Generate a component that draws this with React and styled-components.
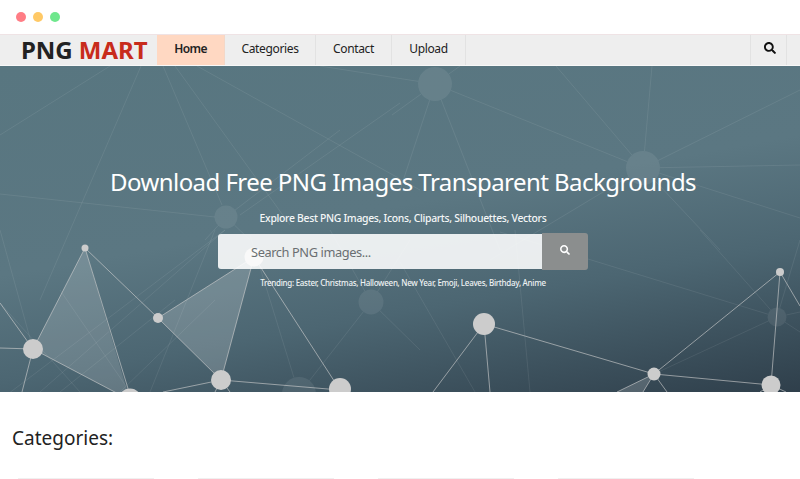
import React from 'react';
import styled, { createGlobalStyle } from 'styled-components';
import { FaSearch } from 'react-icons/fa';

const Global = createGlobalStyle`
  html, body { margin: 0; padding: 0; height: 479px; overflow: hidden; background: #fff; }
  * { box-sizing: border-box; }
  body { font-family: "Noto Sans", "Open Sans", sans-serif; color: #222; }
`;

const Page = styled.div`width: 800px; height: 479px; overflow: hidden;`;
const WindowBar = styled.div`height: 34px; display: flex; align-items: center; gap: 7px; padding: 0 0 0 16px; background: #fff;`;
const Dot = styled.span`width: 10px; height: 10px; border-radius: 50%; background: ${p => p.$c};`;

const Nav = styled.nav`
  height: 32px; display: flex; align-items: stretch; background: #eee;
  border-top: 1px solid #efe3e5; border-bottom: 1px solid #f8f8f8;
`;
const Logo = styled.div`
  width: 157px; padding-left: 21px; font-size: 24px; letter-spacing: -0.05px; font-weight: 700; line-height: 30px; color: #222; white-space: nowrap;
  span { color: #c82c1c; }
`;
const NavItem = styled.a`
  width: ${p => p.$w}px; padding: 0 0 3px; display: flex; align-items: center; justify-content: center;
  font-size: 12px; letter-spacing: ${p => (p.$active ? '-0.6px' : '-0.35px')}; color: #222; font-weight: ${p => (p.$active ? 600 : 400)};
  background: ${p => (p.$active ? '#ffd8c2' : 'transparent')};
  border-right: 1px solid ${p => (p.$active ? '#f3d8c8' : '#e2e2e2')};
`;
const NavSearch = styled.button`
  margin-left: auto; margin-right: 13px; width: 37px; padding: 0 0 4px 2px; border: 0; background: transparent; color: #111;
  border-left: 1px solid #e2e2e2; border-right: 1px solid #e2e2e2; display: flex; align-items: center; justify-content: center; font-size: 12px;
`;

const Hero = styled.section`
  position: relative; height: 326px; overflow: hidden; display: flex; flex-direction: column; align-items: center; padding: 99px 0 0 6px; color: #fff;
  background: linear-gradient(170deg, #587680 0%, #5b7782 45%, #4c6672 68%, #2f3f4b 100%);
`;
const Net = styled.svg`position: absolute; inset: 0; width: 800px; height: 326px;`;
const Heading = styled.h1`
  position: relative; margin: 0; font-size: 24px; letter-spacing: -0.55px; font-weight: 400; line-height: 34px; white-space: nowrap;
`;
const Sub = styled.p`
  position: relative; margin: 10px 0 0; font-size: 10.4px; letter-spacing: -0.3px; line-height: 18px; font-weight: 500; color: #f4f6f7; white-space: nowrap;
`;
const SearchRow = styled.div`position: relative; margin-top: 6px; display: flex; align-items: center; width: 370px; height: 37px;`;
const SearchInput = styled.div`
  flex: 1; height: 35px; padding-left: 33px; display: flex; align-items: center; font-size: 12.8px; letter-spacing: -0.4px; color: #6a6f72;
  background: rgba(255, 255, 255, 0.88); border-radius: 3px 0 0 3px;
`;
const SearchButton = styled.button`
  width: 46px; height: 37px; padding: 0 0 4px; border: 0; background: #8b8e8e; color: #fff; border-radius: 0 3px 3px 0;
  display: flex; align-items: center; justify-content: center; font-size: 10px;
`;
const Trending = styled.p`
  position: relative; margin: 6px 0 0; font-size: 8px; letter-spacing: -0.29px; line-height: 13px; color: #eef2f3; font-weight: 500; white-space: nowrap;
`;

const Categories = styled.section`padding: 33px 0 0 12px;`;
const CategoriesTitle = styled.h2`margin: 0; font-size: 19px; font-weight: 400; line-height: 27px; color: #222;`;
const CardGrid = styled.div`display: grid; grid-template-columns: repeat(4, 136px); gap: 44px; margin: 26px 0 0 6px;`;
const Card = styled.div`height: 100px; border-top: 1px solid #f0f0f0;`;

const faintNodes = [[435,84,17],[643,168,17],[226,217,11.5],[371,302,12.5],[777,317,9.5],[299,394,17]];
const trim = ([a, b, c, d]) => {
  const p = [a, b, c, d];
  const len = Math.hypot(c - a, d - b);
  faintNodes.forEach(([x, y, r]) => {
    if (a === x && b === y) { p[0] = a + ((c - a) * r) / len; p[1] = b + ((d - b) * r) / len; }
    if (c === x && d === y) { p[2] = c - ((c - a) * r) / len; p[3] = d - ((d - b) * r) / len; }
  });
  return p;
};
const faint = [
  [110,66,0,135],[141,66,40,300],[163,66,222,205],[175,66,290,225],[197,66,420,190],[400,103,240,215],
  [0,194,215,217],[320,66,435,84],[435,84,460,66],[435,84,643,168],[435,84,392,115],[435,84,400,190],
  [435,84,500,250],[556,66,643,168],[652,66,643,168],[800,90,643,168],[643,168,800,165],[643,168,800,218],
  [643,168,720,250],[643,168,490,260],[226,217,205,240],[226,217,250,240],[226,217,340,130],
  [0,303,80,392],[215,230,150,392],[215,300,120,392],[225,230,40,392],[225,230,0,400],
  [250,235,299,394],[371,302,299,394],[371,302,330,230],[371,302,410,240],[371,302,420,350],
  [400,262,475,392],[515,230,530,392],[500,232,777,317],[700,230,777,317],[777,317,800,312],[777,317,800,332],
  [777,317,654,374],[777,317,800,240],[60,290,130,392],[60,392,175,300],[0,230,33,349],
].map(trim);
const bright = [
  [85,248,33,349],[85,248,158,318],[85,248,130,395],[33,349,130,400],[33,349,0,348],[33,349,22,392],[33,349,0,303],
  [158,318,254,257],[158,318,221,380],[254,257,221,380],[254,257,340,390],[221,380,163,392],[221,380,340,390],
  [221,380,215,392],[221,380,230,392],[484,324,433,392],[484,324,490,392],[484,324,654,374],[654,374,780,272],
  [654,374,771,385],[654,374,643,392],[654,374,667,392],[654,374,617,392],[780,272,771,385],[780,272,800,306],
  [771,385,760,392],[771,385,786,392],
];
const brightNodes = [[85,248,3.5],[33,349,10],[158,318,5],[221,380,10],[130,400,11.5],[340,389,11],[484,324,11],[654,374,6.5],[771,385,9.5],[780,272,4]];

export default function App() {
  return (
    <Page>
      <Global />
      <WindowBar>
        <Dot $c="#ff7d85" /><Dot $c="#ffc966" /><Dot $c="#6fe78d" />
      </WindowBar>
      <Nav>
        <Logo>PNG <span>MART</span></Logo>
        <NavItem $w={68} $active>Home</NavItem>
        <NavItem $w={91}>Categories</NavItem>
        <NavItem $w={76}>Contact</NavItem>
        <NavItem $w={74}>Upload</NavItem>
        <NavSearch aria-label="Search"><FaSearch /></NavSearch>
      </Nav>
      <Hero>
        <Net viewBox="0 66 800 326" aria-hidden="true">
          <polygon points="85,248 33,349 130,400" fill="#fff" fillOpacity="0.16" />
          <polygon points="158,318 254,257 221,380" fill="#fff" fillOpacity="0.18" />
          <polygon points="654,374 617,392 643,392" fill="#fff" fillOpacity="0.16" />
          {faint.map((l, i) => (
            <line key={i} x1={l[0]} y1={l[1]} x2={l[2]} y2={l[3]} stroke="#fff" strokeOpacity="0.08" strokeWidth="1" />
          ))}
          {faintNodes.map((n, i) => (
            <circle key={i} cx={n[0]} cy={n[1]} r={n[2]} fill="#fff" fillOpacity="0.08" />
          ))}
          {bright.map((l, i) => (
            <line key={i} x1={l[0]} y1={l[1]} x2={l[2]} y2={l[3]} stroke="#cfcfcf" strokeOpacity="0.62" strokeWidth="1" />
          ))}
          {brightNodes.map((n, i) => (
            <circle key={i} cx={n[0]} cy={n[1]} r={n[2]} fill="#cccccc" />
          ))}
          <circle cx="254" cy="257" r="9.5" fill="#cccccc" />
        </Net>
        <Heading>Download Free PNG Images Transparent Backgrounds</Heading>
        <Sub>Explore Best PNG Images, Icons, Cliparts, Silhouettes, Vectors</Sub>
        <SearchRow>
          <SearchInput>Search PNG images...</SearchInput>
          <SearchButton aria-label="Search"><FaSearch /></SearchButton>
        </SearchRow>
        <Trending>Trending: Easter, Christmas, Halloween, New Year, Emoji, Leaves, Birthday, Anime</Trending>
      </Hero>
      <Categories>
        <CategoriesTitle>Categories:</CategoriesTitle>
        <CardGrid><Card /><Card /><Card /><Card /></CardGrid>
      </Categories>
    </Page>
  );
}
